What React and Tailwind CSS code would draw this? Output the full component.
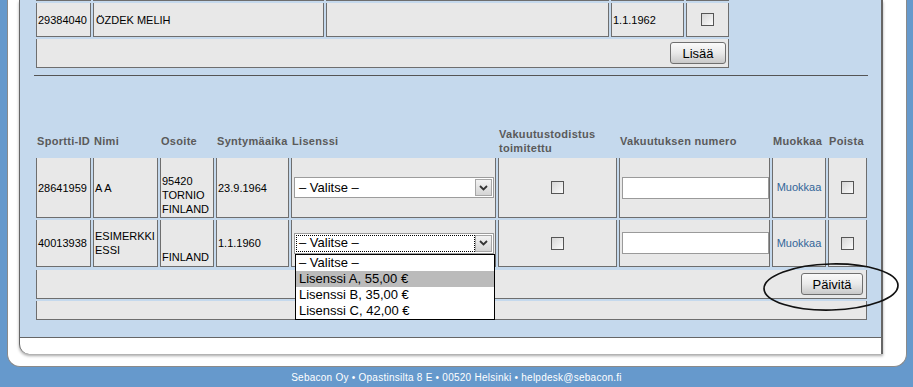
import React from 'react';

const cell = 'bg-[#e8e8e8] border-x border-b border-[#6e6e6e]';
const head = 'flex items-center pl-[1px] text-[11px] leading-[14px] font-bold tracking-[0.3px] text-[#5a5a5a]';
const data = 'flex items-center pl-[1px] text-[11px] leading-[14px] text-black';

function Checkbox() {
  return <span className="block w-[13px] h-[13px] border border-[#555] bg-gradient-to-br from-[#d6d6d6] to-[#fbfbfb]" />;
}

function Btn({ children, className }) {
  return (
    <button className={`h-[22px] rounded-[3px] border border-[#6f6f6f] bg-gradient-to-b from-[#fafafa] via-[#e9e9e9] to-[#c9c9c9] text-[13px] leading-none text-black ${className}`}>
      {children}
    </button>
  );
}

const options = ['– Valitse –', 'Lisenssi A, 55,00 €', 'Lisenssi B, 35,00 €', 'Lisenssi C, 42,00 €'];

function Select({ open }) {
  return (
    <div className="relative ml-[2px] flex h-[21px] w-[200px] border border-[#9c9c9c] bg-white p-px">
      <div className={open ? 'flex flex-1 items-center border border-dotted border-black pl-[2px] text-[13px]' : 'flex flex-1 items-center border border-transparent pl-[2px] text-[13px]'}>
        – Valitse –
      </div>
      <div className="flex w-[17px] items-center justify-center border border-[#a6a6a6] bg-gradient-to-b from-[#f3f3f3] to-[#d4d4d4]">
        <svg width="9" height="6" viewBox="0 0 9 6">
          <path d="M1 1l3.5 3.5L8 1" fill="none" stroke="#333" strokeWidth="1.8" />
        </svg>
      </div>
      {open && (
        <div className="absolute left-0 top-[20px] z-10 w-[200px] border border-black bg-white">
          {options.map((o, i) => (
            <div key={o} className={i === 1 ? 'h-[16px] bg-[#bbbbbb] pl-[3px] text-[13px] leading-[16px]' : 'h-[16px] pl-[3px] text-[13px] leading-[16px]'}>
              {o}
            </div>
          ))}
        </div>
      )}
    </div>
  );
}

function Lines({ lines }) {
  return (
    <div className="flex flex-col">
      {lines.map((l, i) => (
        <div key={i} className="h-[14px]">{l || '\u00a0'}</div>
      ))}
    </div>
  );
}

const rows = [
  { id: '28641959', name: ['A A'], addr: ['', '95420', 'TORNIO', 'FINLAND'], born: '23.9.1964' },
  { id: '40013938', name: ['ESIMERKKI', 'ESSI'], addr: ['', '', 'FINLAND'], born: '1.1.1960', open: true },
];

export default function App() {
  return (
    <div className="relative h-[387px] w-[913px] overflow-hidden bg-[#6699cc] font-['Liberation_Sans',Arial,sans-serif]">
      <div className="ml-[7px] h-[367px] w-[900px] rounded-b-[13px] border-x border-b border-[#8a8a8a] bg-white pl-[11px]">
        <div className="flex h-[354px] w-[864px] flex-col overflow-hidden rounded-bl-[10px] border-l border-r-2 border-[#666] bg-white shadow-[0_2px_3px_rgba(0,0,0,0.35)]">
          <div className="border-b border-[#666] bg-[#c5d9ed] pb-[17px]">
            {/* upper table, scrolled */}
            <div className="ml-[16px] grid grid-cols-[55px_231px_283px_73px_43px] grid-rows-[1px_34px] gap-[2px]">
              <div className={cell} />
              <div className={cell} />
              <div className={cell} />
              <div className={cell} />
              <div className={cell} />
              <div className={`${cell} ${data}`}>29384040</div>
              <div className={`${cell} ${data} pl-[2px]`}>ÖZDEK MELIH</div>
              <div className={cell} />
              <div className={`${cell} ${data} pl-[1px]`}>1.1.1962</div>
              <div className={`${cell} flex items-center justify-center`}>
                <Checkbox />
              </div>
            </div>
            <div className={`${cell} ml-[16px] mt-[2px] flex h-[29px] w-[693px] items-center justify-end pr-[2px]`}>
              <Btn className="w-[56px]">Lisää</Btn>
            </div>
            <div className="ml-[14px] mt-[7px] h-px w-[834px] bg-[#555]" />

            {/* lower table */}
            <div className="ml-[16px] mt-[50px] grid grid-cols-[55px_65px_54px_73px_205px_119px_151px_54px_39px] grid-rows-[30px_60px_47px] gap-[2px]">
              <div className={head}>Sportti-ID</div>
              <div className={head}>Nimi</div>
              <div className={head}>Osoite</div>
              <div className={head}>Syntymäaika</div>
              <div className={head}>Lisenssi</div>
              <div className={head}>
                Vakuutustodistus
                <br />
                toimitettu
              </div>
              <div className={head}>Vakuutuksen numero</div>
              <div className={head}>Muokkaa</div>
              <div className={head}>Poista</div>

              {rows.map((r) => (
                <React.Fragment key={r.id}>
                  <div className={`${cell} ${data}`}>{r.id}</div>
                  <div className={`${cell} ${data}`}>
                    <Lines lines={r.name} />
                  </div>
                  <div className={`${cell} ${data}`}>
                    <Lines lines={r.addr} />
                  </div>
                  <div className={`${cell} ${data}`}>{r.born}</div>
                  <div className={`${cell} flex items-center`}>
                    <Select open={r.open} />
                  </div>
                  <div className={`${cell} flex items-center justify-center`}>
                    <Checkbox />
                  </div>
                  <div className={`${cell} flex items-center pl-[2px]`}>
                    <div className="h-[22px] w-[147px] border border-[#9a9a9a] bg-white" />
                  </div>
                  <div className={`${cell} flex items-center justify-center text-[11px] text-[#336699]`}>Muokkaa</div>
                  <div className={`${cell} flex items-center justify-center`}>
                    <Checkbox />
                  </div>
                </React.Fragment>
              ))}
            </div>
            <div className={`${cell} ml-[16px] mt-[3px] flex h-[29px] w-[831px] items-center justify-end pr-[3px]`}>
              <Btn className="w-[62px]">Päivitä</Btn>
            </div>
            <div className={`${cell} ml-[16px] mt-[2px] h-[19px] w-[831px]`} />
          </div>
          <div className="h-[16px]" />
        </div>
      </div>
      <div className="flex h-[20px] items-center justify-center text-[10px] tracking-[0.25px] text-white">
        Sebacon Oy • Opastinsilta 8 E • 00520 Helsinki • helpdesk@sebacon.fi
      </div>

      {/* hand-drawn highlight */}
      <svg className="pointer-events-none absolute left-[760px] top-[258px]" width="145" height="58" viewBox="0 0 145 58">
        <ellipse cx="71" cy="29" rx="67" ry="23" fill="none" stroke="#111" strokeWidth="1.7" transform="rotate(-1.5 71 29)" />
      </svg>
    </div>
  );
}
